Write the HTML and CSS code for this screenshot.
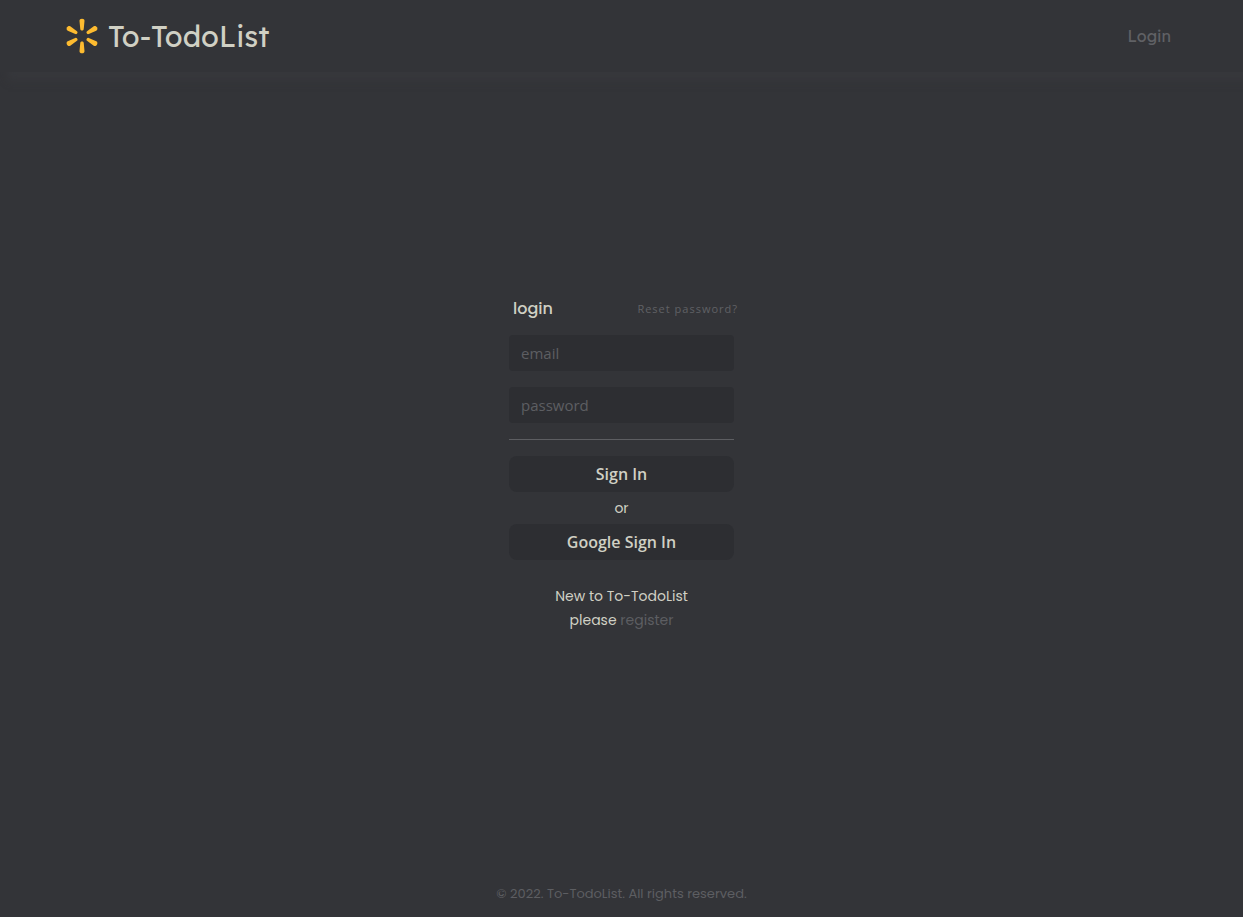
FILE: index.html
```html
<!DOCTYPE html>
<html lang="en">
<head>
<meta charset="utf-8">
<meta name="viewport" content="width=device-width, initial-scale=1">
<title>To-TodoList</title>
<link rel="stylesheet" href="styles.css">
</head>
<body class="page">
<header class="header">
  <a class="brand" href="#">
    <svg class="brand-mark" viewBox="0 0 32 36" aria-hidden="true">
      <defs><path id="ray" d="M16 12.500c-.9 0-1.600-.5-1.700-1.300L13.500 3C13.400 1.500 14.500.7 16 .7s2.600.8 2.500 2.300l-.8 8.200c-.1.8-.8 1.300-1.700 1.300z"/></defs>
      <use href="#ray"/>
      <use href="#ray" transform="rotate(60 16 18)"/>
      <use href="#ray" transform="rotate(120 16 18)"/>
      <use href="#ray" transform="rotate(180 16 18)"/>
      <use href="#ray" transform="rotate(240 16 18)"/>
      <use href="#ray" transform="rotate(300 16 18)"/>
    </svg>
    <span>To-TodoList</span>
  </a>
  <nav><a class="nav-link" href="#">Login</a></nav>
</header>
<main class="main">
  <form class="form">
    <div class="form-head">
      <h1 class="title">login</h1>
      <a class="reset" href="#">Reset password?</a>
    </div>
    <input class="field" type="email" placeholder="email" aria-label="email">
    <input class="field" type="password" placeholder="password" aria-label="password">
    <hr class="rule">
    <div class="actions">
      <button class="button" type="submit">Sign In</button>
      <span class="or">or</span>
      <button class="button" type="button">Google Sign In</button>
    </div>
    <p class="signup">New to To-TodoList<br>please <a class="register" href="#">register</a></p>
  </form>
</main>
<footer class="footer">© 2022. To-TodoList. All rights reserved.</footer>
</body>
</html>
```
FILE: styles.css
```css
* { box-sizing: border-box; }
.page {
  margin: 0;
  min-height: 100vh;
  display: flex;
  flex-direction: column;
  background: #333438;
  color: #d0d0c4;
  font-family: Poppins, Inter, sans-serif;
}
a { color: inherit; text-decoration: none; }
.header {
  height: 72px;
  padding: 0 72px 0 66px;
  display: flex;
  align-items: center;
  justify-content: space-between;
  box-shadow: 8px 8px 8px #37383c;
}
.brand {
  display: flex;
  align-items: center;
  gap: 10px;
  font-family: Lexend, Inter, sans-serif;
  font-size: 29px;
}
.brand-mark { width: 32px; height: 36px; fill: #fdbb30; }
.nav-link { color: #606165; font-family: Lexend, Inter, sans-serif; font-size: 16px; }
.main {
  flex: 1;
  display: flex;
  justify-content: center;
  align-items: center;
  padding-bottom: 26px;
}
.form {
  width: 225px;
  display: flex;
  flex-direction: column;
  gap: 16px;
}
.form-head {
  display: flex;
  justify-content: space-between;
  align-items: center;
  height: 20px;
  margin: 0 -4px 0 4px;
}
.title { margin: 0; font-size: 16px; font-weight: 500; }
.reset { color: #606165; font-family: "Open Sans", sans-serif; font-size: 11px; letter-spacing: 1px; }
.field {
  width: 100%;
  height: 36px;
  padding: 0 12px;
  border: 0;
  border-radius: 4px;
  background: #2d2e32;
  color: #d0d0c4;
  font-family: "Open Sans", sans-serif;
  font-size: 15px;
}
.field::placeholder { color: #5d5e62; opacity: 1; }
.rule { width: 100%; height: 1px; margin: 0; border: 0; background: #5d5e62; }
.actions { display: flex; flex-direction: column; align-items: center; }
.button {
  width: 100%;
  height: 36px;
  border: 0;
  border-radius: 8px;
  background: #2d2e32;
  color: #d0d0c4;
  font-family: "Open Sans", sans-serif;
  font-size: 16px;
  font-weight: 600;
}
.or { font-size: 14px; line-height: 32px; }
.signup { margin: 8px 0 0; text-align: center; font-size: 14px; line-height: 24px; }
.register { color: #5d5e62; }
.footer { padding: 0 0 13px; text-align: center; color: #5d5e62; font-size: 13px; line-height: 20px; }
```
